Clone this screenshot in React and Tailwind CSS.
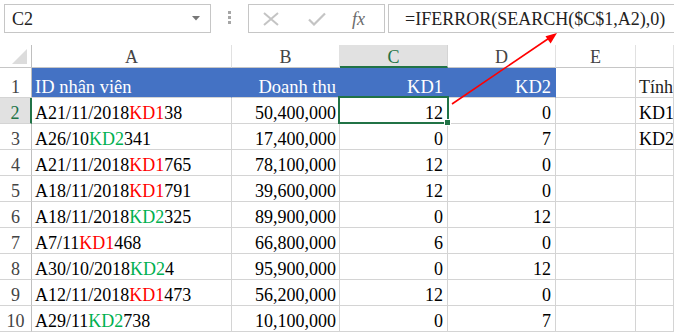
import React from 'react';

const rows = [
  { n: 2, pre: 'A21/11/2018', code: 'KD1', post: '38', rev: '50,400,000', kd1: 12, kd2: 0, f: 'KD1' },
  { n: 3, pre: 'A26/10', code: 'KD2', post: '341', rev: '17,400,000', kd1: 0, kd2: 7, f: 'KD2' },
  { n: 4, pre: 'A21/11/2018', code: 'KD1', post: '765', rev: '78,100,000', kd1: 12, kd2: 0, f: '' },
  { n: 5, pre: 'A18/11/2018', code: 'KD1', post: '791', rev: '39,600,000', kd1: 12, kd2: 0, f: '' },
  { n: 6, pre: 'A18/11/2018', code: 'KD2', post: '325', rev: '89,900,000', kd1: 0, kd2: 12, f: '' },
  { n: 7, pre: 'A7/11', code: 'KD1', post: '468', rev: '66,800,000', kd1: 6, kd2: 0, f: '' },
  { n: 8, pre: 'A30/10/2018', code: 'KD2', post: '4', rev: '95,900,000', kd1: 0, kd2: 12, f: '' },
  { n: 9, pre: 'A12/11/2018', code: 'KD1', post: '473', rev: '56,200,000', kd1: 12, kd2: 0, f: '' },
  { n: 10, pre: 'A29/11', code: 'KD2', post: '738', rev: '10,100,000', kd1: 0, kd2: 7, f: '' },
];

const cell = 'flex items-end leading-[20px] border-r border-b border-[#d4d4d4] whitespace-nowrap overflow-hidden';
const head = 'bg-[#4472c4] border-r-[#4472c4] text-white text-[18.5px]';

function FormulaBar() {
  return (
    <div className="flex items-start h-[45px] pt-[4px] pl-[4px]">
      <div className="flex items-center justify-between w-[207px] h-[29px] border border-[#c6c6c6] bg-white pl-[7px] pr-[10px]">
        <span className="text-[18px] leading-[20px] text-[#222] pt-[1px]">C2</span>
        <svg width="8" height="5" viewBox="0 0 8 5"><path d="M0 0H8L4 4.5Z" fill="#777" /></svg>
      </div>
      <div className="flex flex-col gap-[2px] w-[4px] ml-[17px] mt-[7px]">
        <div className="w-[3px] h-[3px] bg-[#a6a6a6]" />
        <div className="w-[3px] h-[3px] bg-[#a6a6a6]" />
        <div className="w-[3px] h-[3px] bg-[#a6a6a6]" />
      </div>
      <div className="flex items-center w-[137px] h-[29px] ml-[16px] border border-[#c6c6c6] bg-white">
        <svg className="ml-[14px]" width="16" height="14" viewBox="0 0 16 14">
          <path d="M1 1L15 13M15 1L1 13" stroke="#c4c4c4" strokeWidth="2" fill="none" />
        </svg>
        <svg className="ml-[29px]" width="18" height="14" viewBox="0 0 18 14">
          <path d="M1 7.5L6 12.5L17 1.5" stroke="#c4c4c4" strokeWidth="2.2" fill="none" />
        </svg>
        <span className="ml-[26px] italic text-[18px] leading-[20px] text-[#6b6b6b]">fx</span>
      </div>
      <div className="flex items-center h-[29px] flex-1 ml-[3px] border border-r-0 border-[#c6c6c6] bg-white pl-[16px] whitespace-nowrap overflow-hidden">
        <span className="text-[18px] leading-[20px] text-[#222] pt-[1px]">=IFERROR(SEARCH($C$1,A2),0)</span>
      </div>
    </div>
  );
}

function ColHeader({ label, active }) {
  return (
    <div
      className={`flex items-center justify-center text-[18px] leading-[20px] pt-[2px] border-r border-b ${
        active
          ? 'bg-[#e1e1e1] text-[#217346] border-b-2 border-b-[#217346] border-r-[#d4d4d4]'
          : 'bg-white text-[#444] border-r-[#e1e1e1] border-b-[#c6c6c6]'
      }`}
    >
      {label}
    </div>
  );
}

function RowNum({ n, active }) {
  return (
    <div
      className={`flex items-end justify-center leading-[20px] border-b border-r ${
        active
          ? 'bg-[#e1e1e1] text-[#217346] border-r-2 border-r-[#217346] border-b-[#d4d4d4]'
          : 'bg-white text-[#444] border-r-[#bfbfbf] border-b-[#d4d4d4]'
      }`}
    >
      {n}
    </div>
  );
}

function Sheet() {
  return (
    <div className="grid grid-cols-[32px_200px_108px_108px_108px_80px_1fr] grid-rows-[23px_30px_repeat(9,26px)] text-[18px]">
      <div className="flex items-end justify-end pr-[4px] pb-[3px] bg-white border-r border-b border-r-[#bfbfbf] border-b-[#c6c6c6]">
        <svg width="15" height="15" viewBox="0 0 15 15"><path d="M15 0V15H0Z" fill="#dcdcdc" /></svg>
      </div>
      <ColHeader label="A" />
      <ColHeader label="B" />
      <ColHeader label="C" active />
      <ColHeader label="D" />
      <ColHeader label="E" />
      <ColHeader label="" />

      <RowNum n={1} />
      <div className={`${cell} ${head} pl-[3px]`}>ID nhân viên</div>
      <div className={`${cell} ${head} justify-end pr-[3px]`}>Doanh thu</div>
      <div className={`${cell} ${head} justify-end pr-[4px]`}>KD1</div>
      <div className={`${cell} ${head} justify-end pr-[4px]`}>KD2</div>
      <div className={cell} />
      <div className={`${cell} pl-[3px] text-[#222]`}>Tính</div>

      {rows.map((r) => (
        <React.Fragment key={r.n}>
          <RowNum n={r.n} active={r.n === 2} />
          <div className={`${cell} pl-[3px] text-black`}>
            {r.pre}
            <span className={r.code === 'KD1' ? 'text-[#ff0000]' : 'text-[#00b050]'}>{r.code}</span>
            {r.post}
          </div>
          <div className={`${cell} justify-end pr-[3px] text-black`}>{r.rev}</div>
          <div className={`${cell} justify-end pr-[4px] text-black ${r.n === 2 ? 'relative overflow-visible' : ''}`}>
            {r.kd1}
            {r.n === 2 && (
              <>
                <div className="absolute left-[-2px] top-[-2px] right-[-2px] bottom-[-1px] border-2 border-[#217346]" />
                <div className="absolute right-[-4px] bottom-[-3px] w-[7px] h-[7px] bg-[#217346] border border-white" />
              </>
            )}
          </div>
          <div className={`${cell} justify-end pr-[4px] text-black`}>{r.kd2}</div>
          <div className={cell} />
          <div className={`${cell} pl-[3px] text-black`}>{r.f}</div>
        </React.Fragment>
      ))}
    </div>
  );
}

export default function App() {
  return (
    <div className="relative w-[674px] h-[333px] overflow-hidden bg-white font-['Liberation_Serif',serif]">
      <FormulaBar />
      <Sheet />
      <svg className="absolute left-0 top-0 pointer-events-none" width="674" height="333" viewBox="0 0 674 333">
        <line x1="452" y1="104" x2="550" y2="37.5" stroke="#ff0000" strokeWidth="1.6" />
        <path d="M557 33L545.5 36.2L550.6 43.6Z" fill="#ff0000" />
      </svg>
    </div>
  );
}
